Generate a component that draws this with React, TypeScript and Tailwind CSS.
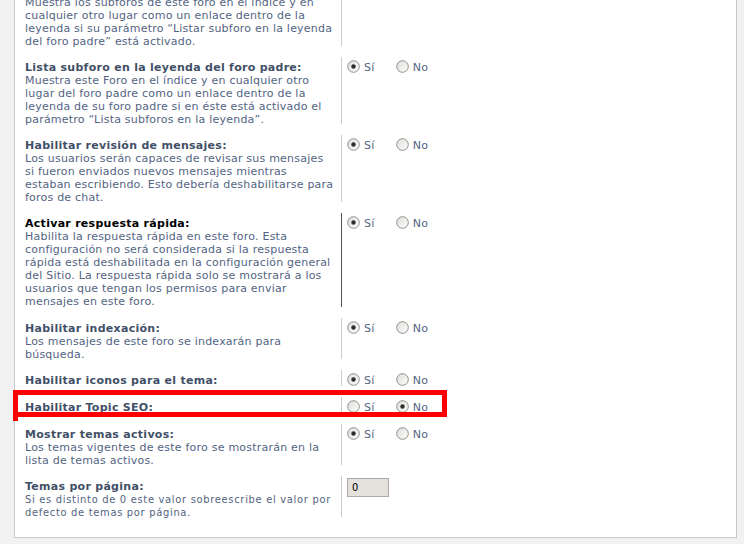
import React from 'react';

type Setting = {
  title: string;
  lines?: string[];
  dark?: boolean;
  narrow?: boolean;
  value?: 'si' | 'no' | 'input';
  extra?: string;
};

const settings: Setting[] = [
  {
    title: 'Listar subforos en la leyenda:',
    lines: [
      'Muestra los subforos de este foro en el índice y en',
      'cualquier otro lugar como un enlace dentro de la',
      'leyenda si su parámetro “Listar subforo en la leyenda',
      'del foro padre” está activado.',
    ],
  },
  {
    title: 'Lista subforo en la leyenda del foro padre:',
    lines: [
      'Muestra este Foro en el índice y en cualquier otro',
      'lugar del foro padre como un enlace dentro de la',
      'leyenda de su foro padre si en éste está activado el',
      'parámetro “Lista subforos en la leyenda”.',
    ],
    value: 'si',
  },
  {
    title: 'Habilitar revisión de mensajes:',
    lines: [
      'Los usuarios serán capaces de revisar sus mensajes',
      'si fueron enviados nuevos mensajes mientras',
      'estaban escribiendo. Esto debería deshabilitarse para',
      'foros de chat.',
    ],
    value: 'si',
  },
  {
    title: 'Activar respuesta rápida:',
    lines: [
      'Habilita la respuesta rápida en este foro. Esta',
      'configuración no será considerada si la respuesta',
      'rápida está deshabilitada en la configuración general',
      'del Sitio. La respuesta rápida solo se mostrará a los',
      'usuarios que tengan los permisos para enviar',
      'mensajes en este foro.',
    ],
    dark: true,
    value: 'si',
    extra: 'pb-[1px]',
  },
  {
    title: 'Habilitar indexación:',
    lines: ['Los mensajes de este foro se indexarán para', 'búsqueda.'],
    value: 'si',
  },
  { title: 'Habilitar iconos para el tema:', value: 'si' },
  { title: 'Habilitar Topic SEO:', value: 'no' },
  {
    title: 'Mostrar temas activos:',
    lines: ['Los temas vigentes de este foro se mostrarán en la', 'lista de temas activos.'],
    value: 'si',
  },
  {
    title: 'Temas por página:',
    lines: ['Si es distinto de 0 este valor sobreescribe el valor por', 'defecto de temas por página.'],
    narrow: true,
    value: 'input',
  },
];

function Radio({ checked }: { checked: boolean }) {
  return (
    <svg width="13" height="13" viewBox="0 0 13 13" className="shrink-0">
      <defs>
        <linearGradient id="rfill" x1="0" y1="0" x2="1" y2="1">
          <stop offset="0" stopColor="#dcdcd6" />
          <stop offset="1" stopColor="#ffffff" />
        </linearGradient>
      </defs>
      <circle cx="6.5" cy="6.5" r="5.8" fill="url(#rfill)" stroke="#8f8f8f" strokeWidth="1" />
      {checked && <circle cx="6.5" cy="6.5" r="2.2" fill="#2e2e2e" />}
    </svg>
  );
}

function Choice({ label, checked }: { label: string; checked: boolean }) {
  return (
    <label className="flex h-[13px] items-center gap-[4px] text-[11px] leading-[13px] tracking-[0.3px] text-[#536482]">
      <Radio checked={checked} />
      <span className="translate-y-[1px]">{label}</span>
    </label>
  );
}

function Row({ s }: { s: Setting }) {
  return (
    <div className="flex mb-[11px]">
      <div className={`w-[316px] shrink-0 pt-[4px] ${s.extra ?? ''}`}>
        <div className="-mb-[2px]">
          <div
            className={`font-bold whitespace-nowrap text-[11px] leading-[13px] tracking-[0.28px] ${
              s.dark ? 'text-black' : 'text-[#425067]'
            }`}
          >
            {s.title}
          </div>
          {s.lines?.map((line) => (
            <div
              key={line}
              className={`whitespace-nowrap text-[11px] leading-[13px] text-[#536482] ${
                s.narrow
                  ? "font-['DejaVu_Sans_Condensed',sans-serif] tracking-[0.7px]"
                  : 'tracking-[0.22px]'
              }`}
            >
              {line}
            </div>
          ))}
        </div>
      </div>
      <div
        className={`flex-1 border-l pl-[5px] pt-[3px] min-h-[16px] ${
          s.dark ? 'border-[#555555]' : 'border-[#cccccc]'
        }`}
      >
        {s.value === 'input' ? (
          <div className="w-[42px] h-[19px] -mt-[1px] border border-[#a9a9a9] bg-[#e4e1dc] pl-[4px] text-[11px] leading-[17px] text-black font-['DejaVu_Sans_Condensed',sans-serif]">
            0
          </div>
        ) : s.value ? (
          <div className="flex gap-[21px]">
            <Choice label="Sí" checked={s.value === 'si'} />
            <Choice label="No" checked={s.value === 'no'} />
          </div>
        ) : null}
      </div>
    </div>
  );
}

export default function App() {
  return (
    <div className="relative h-[544px] overflow-hidden bg-[#f1f1f1] font-['DejaVu_Sans','Verdana',sans-serif]">
      <div className="ml-[14px] w-[723px] h-[538px] overflow-hidden bg-white border-l border-r border-b border-[#c9c9c9] pl-[10px]">
        <div className="-mt-[21px]">
          {settings.map((s) => (
            <Row key={s.title} s={s} />
          ))}
        </div>
      </div>

      {/* annotation box */}
      <div className="absolute left-[13px] top-[390px] w-[434px] h-[27px] border-[5px] border-[#ff0000]" />
      <div className="absolute left-[13px] top-[417px] w-[5px] h-[4px] bg-[#ff0000]" />
    </div>
  );
}
